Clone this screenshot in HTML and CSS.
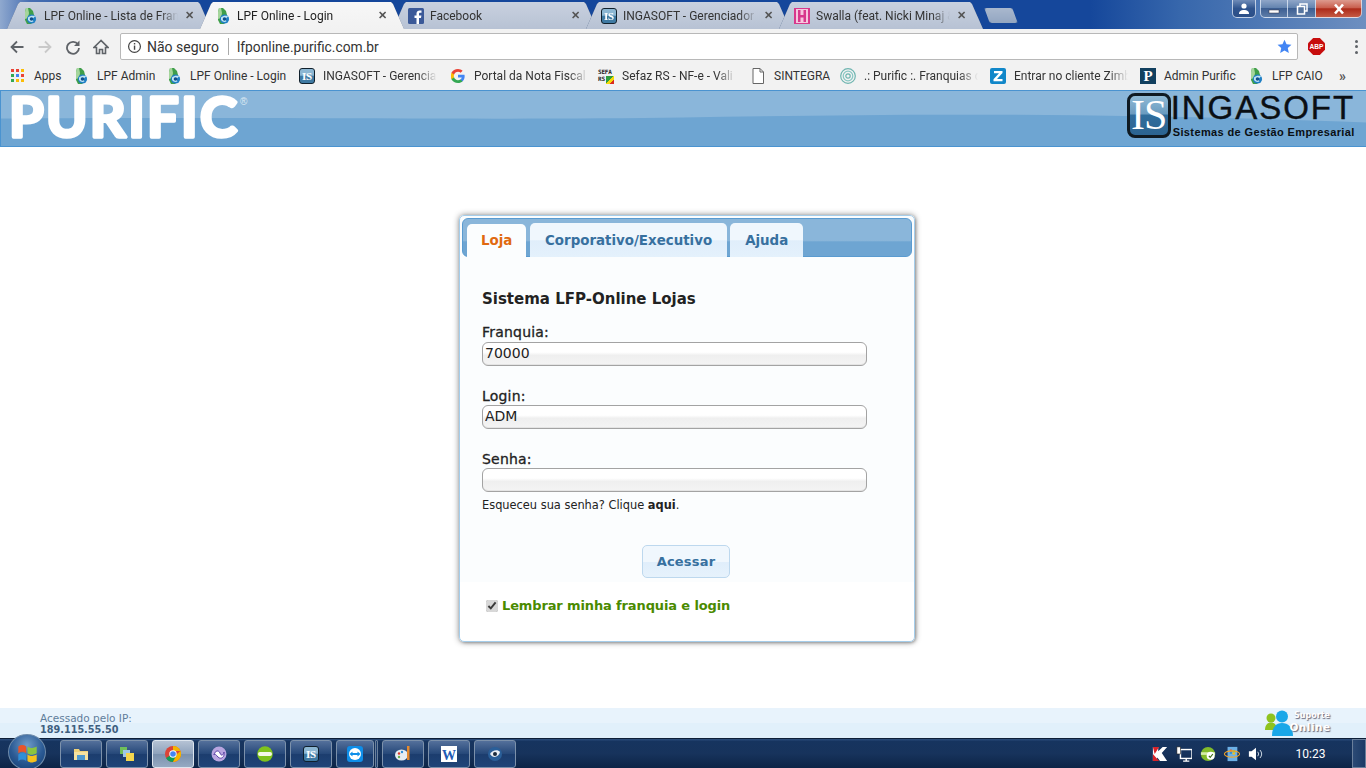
FILE: index.html
```html
<!DOCTYPE html>
<html lang="pt-BR">
<head>
<meta charset="utf-8">
<title>LPF Online - Login</title>
<link rel="stylesheet" href="styles.css">
</head>
<body>
<svg class="defs" aria-hidden="true">
  <symbol id="i-lpf" viewBox="0 0 16 16">
    <path d="M4 0h4l3 3 1 4-1 7-2 2H5l-2-4V4z" fill="#3f9e4a"/>
    <path d="M4 0h2l1 5-1 5-3 1V4z" fill="#a5d59c"/>
    <circle cx="9.500" cy="11" r="4.600" fill="#1f7fc4"/>
    <path d="M6 9.500c2-2 6-2.500 7.500-.5-2-.5-3.500 2.500-2 4.500-2 1-4 .5-5.500-1.500z" fill="#bfe4f5"/>
    <circle cx="9.500" cy="11" r="1.800" fill="#12508c"/>
  </symbol>
  <symbol id="i-fb" viewBox="0 0 16 16">
    <rect width="16" height="16" rx="1.500" fill="#3b5998"/>
    <path d="M11 16v-6h2l.4-2.500H11V6c0-.8.300-1.200 1.200-1.200h1.300V2.500c-.5-.1-1.200-.1-1.900-.1C10 2.400 8.500 3.500 8.500 5.500v2H6.500V10h2v6z" fill="#fff"/>
  </symbol>
  <symbol id="i-sw" viewBox="0 0 16 16">
    <rect width="16" height="16" fill="#d8388c"/>
    <rect x="2" y="1" width="12" height="14" fill="#f7c6de"/>
    <path d="M4 2h2.500v5h3V2H12v12H9.500V9.500h-3V14H4z" fill="#d8388c"/>
  </symbol>
  <symbol id="i-g" viewBox="0 0 16 16">
    <path d="M15.600 8.200c0-.6-.1-1.100-.2-1.600H8v3h4.300c-.2 1-.8 1.800-1.600 2.400v2h2.600c1.500-1.400 2.300-3.400 2.300-5.800z" fill="#4285f4"/>
    <path d="M8 16c2.200 0 4-.7 5.300-2l-2.600-2c-.7.500-1.600.8-2.700.8-2.100 0-3.900-1.400-4.500-3.300H.5v2.100C1.800 14.200 4.700 16 8 16z" fill="#34a853"/>
    <path d="M3.500 9.500c-.3-1-.3-2.100 0-3.100V4.300H.5C-.2 5.600-.2 10.300.5 11.600z" fill="#fbbc05"/>
    <path d="M8 3.200c1.200 0 2.200.4 3 1.200l2.300-2.300C11.900.8 10.100 0 8 0 4.700 0 1.800 1.800.5 4.300l3 2.100C4.100 4.600 5.900 3.200 8 3.200z" fill="#ea4335"/>
  </symbol>
  <symbol id="i-doc" viewBox="0 0 16 16">
    <path d="M3 .5h7l3.500 3.500v11.500H3z" fill="#fff" stroke="#666"/>
    <path d="M10 .5v3.500h3.500" fill="none" stroke="#666"/>
  </symbol>
  <symbol id="i-ring" viewBox="0 0 16 16">
    <circle cx="8" cy="8" r="7.300" fill="none" stroke="#6fb5b0" stroke-width="1.200"/>
    <circle cx="8" cy="8" r="4.800" fill="none" stroke="#86c6c2" stroke-width="1.200"/>
    <circle cx="8" cy="8" r="2.200" fill="none" stroke="#6fb5b0" stroke-width="1.200"/>
  </symbol>
  <symbol id="i-z" viewBox="0 0 16 16">
    <rect width="16" height="16" rx="2" fill="#1187c9"/>
    <path d="M4 3h8.500v2L7 11h5.500v2.300H3.500v-2L9 5.300H4z" fill="#fff"/>
  </symbol>
  <symbol id="i-win" viewBox="0 0 16 16">
    <path d="M1 3.500c2-1.500 4-1.500 6 0v5c-2-1.500-4-1.500-6 0z" fill="#e8542a"/>
    <path d="M8 3.500c2 1.500 4 1.500 7 0v5c-3 1.500-5 1.500-7 0z" fill="#8bc53f"/>
    <path d="M1 9.500c2-1.500 4-1.500 6 0v5c-2-1.500-4-1.500-6 0z" fill="#2f8fd8"/>
    <path d="M8 9.500c2 1.500 4 1.500 7 0v5c-3 1.500-5 1.500-7 0z" fill="#f6c21c"/>
  </symbol>
</svg>

<div class="tabstrip">
  <div class="tabs">
    <div class="tab"><svg class="ico"><use href="#i-lpf"/></svg><span class="tab-title">LPF Online - Lista de Fran</span><span class="tab-x">✕</span></div>
    <div class="tab tab-active"><svg class="ico"><use href="#i-lpf"/></svg><span class="tab-title">LPF Online - Login</span><span class="tab-x">✕</span></div>
    <div class="tab"><svg class="ico"><use href="#i-fb"/></svg><span class="tab-title">Facebook</span><span class="tab-x">✕</span></div>
    <div class="tab"><span class="fav-is">IS</span><span class="tab-title">INGASOFT - Gerenciador</span><span class="tab-x">✕</span></div>
    <div class="tab"><svg class="ico"><use href="#i-sw"/></svg><span class="tab-title">Swalla (feat. Nicki Minaj &amp;</span><span class="tab-x">✕</span></div>
    <div class="tab-new"></div>
  </div>
  <div class="winctl">
    <div class="wb wb-user"><svg viewBox="0 0 14 12" class="wb-ico"><circle cx="7" cy="3" r="2.600" fill="#fff"/><path d="M2 11c0-3 2-4 5-4s5 1 5 4z" fill="#fff"/></svg></div>
    <div class="wb wb-min"><svg viewBox="0 0 14 12" class="wb-ico"><rect x="2" y="7" width="10" height="3" fill="#fff" stroke="#334" stroke-width=".5"/></svg></div>
    <div class="wb wb-max"><svg viewBox="0 0 14 12" class="wb-ico"><rect x="5" y="1" width="7" height="7" fill="none" stroke="#fff" stroke-width="1.500"/><rect x="2.500" y="3.500" width="7" height="7.500" fill="#56759f" stroke="#fff" stroke-width="1.500"/></svg></div>
    <div class="wb wb-close"><svg viewBox="0 0 14 12" class="wb-ico"><path d="M3 1.500l8 9M11 1.500l-8 9" stroke="#fff" stroke-width="2.600"/></svg></div>
  </div>
</div>

<div class="toolbar">
  <div class="nav"><svg viewBox="0 0 16 16" class="nav-ico"><path d="M14.500 8H3M8 2.500L2.500 8 8 13.500" fill="none" stroke="#5f6368" stroke-width="1.800"/></svg></div>
  <div class="nav"><svg viewBox="0 0 16 16" class="nav-ico"><path d="M1.500 8H13M8 2.500L13.500 8 8 13.500" fill="none" stroke="#c9c9c9" stroke-width="1.800"/></svg></div>
  <div class="nav"><svg viewBox="0 0 16 16" class="nav-ico"><path d="M13 5.500A6 6 0 1 0 14 9" fill="none" stroke="#5f6368" stroke-width="1.800"/><path d="M14.500 1.500v5.500H9z" fill="#5f6368"/></svg></div>
  <div class="nav"><svg viewBox="0 0 16 16" class="nav-ico"><path d="M8 1.500L1 8.500h2.500v6h3v-4h3v4h3v-6H15z" fill="none" stroke="#5f6368" stroke-width="1.600"/></svg></div>
  <div class="omnibox">
    <svg viewBox="0 0 16 16" class="omni-info"><circle cx="8" cy="8" r="6.300" fill="none" stroke="#444" stroke-width="1.300"/><rect x="7.300" y="7" width="1.500" height="4.500" fill="#444"/><rect x="7.300" y="4.300" width="1.500" height="1.500" fill="#444"/></svg>
    <span class="omni-sec">Não seguro</span>
    <span class="omni-sep"></span>
    <span class="omni-url">lfponline.purific.com.br</span>
    <svg viewBox="0 0 16 16" class="omni-star"><path d="M8 .8l2.200 4.800 5.200.6-3.900 3.500 1.100 5.200L8 12.300l-4.600 2.600 1.100-5.200L.6 6.200l5.200-.6z" fill="#4285f4"/></svg>
  </div>
  <svg viewBox="0 0 18 18" class="abp"><path d="M5.500 0h7L18 5.500v7L12.500 18h-7L0 12.500v-7z" fill="#c70d0d"/><text x="9" y="12" text-anchor="middle" class="svg-abp">ABP</text></svg>
  <div class="dots"><i></i><i></i><i></i></div>
</div>

<div class="bookmarks">
  <div class="bm"><span class="apps"><i class="a1"></i><i class="a2"></i><i class="a3"></i><i class="a4"></i><i class="a5"></i><i class="a6"></i><i class="a7"></i><i class="a8"></i><i class="a9"></i></span><span class="bm-t bm-apps">Apps</span></div>
  <div class="bm"><svg class="ico"><use href="#i-lpf"/></svg><span class="bm-t">LPF Admin</span></div>
  <div class="bm"><svg class="ico"><use href="#i-lpf"/></svg><span class="bm-t">LPF Online - Login</span></div>
  <div class="bm"><span class="fav-is">IS</span><span class="bm-t bm-fade">INGASOFT - Gerencia</span></div>
  <div class="bm"><svg class="ico ico-g"><use href="#i-g"/></svg><span class="bm-t bm-fade">Portal da Nota Fiscal</span></div>
  <div class="bm"><span class="fav-sefaz">SEFA<br>RS</span><span class="bm-t bm-fade">Sefaz RS - NF-e - Vali</span></div>
  <div class="bm"><svg class="ico"><use href="#i-doc"/></svg><span class="bm-t">SINTEGRA</span></div>
  <div class="bm"><svg class="ico"><use href="#i-ring"/></svg><span class="bm-t bm-fade">.: Purific :. Franquias d</span></div>
  <div class="bm"><svg class="ico"><use href="#i-z"/></svg><span class="bm-t bm-fade">Entrar no cliente Zimb</span></div>
  <div class="bm"><span class="fav-p">P</span><span class="bm-t">Admin Purific</span></div>
  <div class="bm"><svg class="ico"><use href="#i-lpf"/></svg><span class="bm-t">LFP CAIO</span></div>
  <div class="bm bm-more">»</div>
</div>

<header class="site-head">
  <svg class="wave" viewBox="0 0 1366 56" preserveAspectRatio="none" aria-hidden="true"><path d="M0 28C200 26 500 30 683 27 900 23 1100 22 1366 32V56H0z" fill="#6ea5d2"/></svg>
  <svg class="brand" viewBox="0 0 255 55" aria-label="PURIFIC">
    <text x="8" y="46" textLength="228" class="brand-name">PURIFIC</text>
    <text x="239" y="14" class="brand-r">®</text>
  </svg>
  <div class="inga">
    <div class="inga-box">IS</div>
    <div class="inga-text">
      <div class="inga-name">INGASOFT</div>
      <div class="inga-sub">Sistemas de Gestão Empresarial</div>
    </div>
  </div>
</header>

<main class="page">
  <section class="card">
    <nav class="card-tabs">
      <a class="ct ct-on">Loja</a>
      <a class="ct ct-a">Corporativo/Executivo</a>
      <a class="ct ct-b">Ajuda</a>
    </nav>
    <form class="form">
      <h1 class="form-title">Sistema LFP-Online Lojas</h1>
      <label class="lbl">Franquia:</label>
      <input class="inp" type="text" value="70000">
      <label class="lbl lbl-next">Login:</label>
      <input class="inp" type="text" value="ADM">
      <label class="lbl lbl-next">Senha:</label>
      <input class="inp" type="password">
      <p class="hint">Esqueceu sua senha? Clique <b>aqui</b>.</p>
      <div class="actions"><button class="btn" type="button">Acessar</button></div>
      <label class="remember"><input class="chk" type="checkbox" checked><span>Lembrar minha franquia e login</span></label>
    </form>
  </section>
</main>

<div class="foot">
  <div class="foot-ip"><div class="ip-l">Acessado pelo IP:</div><div class="ip-v">189.115.55.50</div></div>
  <div class="support">
    <svg viewBox="0 0 28 26" class="sup-ico"><circle cx="6" cy="8" r="4.500" fill="#8fc31f"/><path d="M0 20c0-5 2.500-7.500 6-7.500s6 2.500 6 7.500z" fill="#8fc31f"/><circle cx="17" cy="6.500" r="6" fill="#1aa7e8"/><path d="M7 26c0-9 4-13 10-13s11 4 11 13z" fill="#1aa7e8"/></svg>
    <div class="sup-t"><span class="sup-a">Suporte</span><span class="sup-b">Online</span></div>
  </div>
</div>

<footer class="taskbar">
  <div class="orb"><svg class="orb-logo"><use href="#i-win"/></svg></div>
  <div class="tb"><svg viewBox="0 0 16 16" class="tb-ico"><path d="M1 3h5l1 2h8v9H1z" fill="#f0d279"/><rect x="1" y="6" width="14" height="8" fill="#f6e3a0"/><rect x="4" y="9" width="8" height="5" fill="#4f9ad0"/></svg></div>
  <div class="tb"><svg viewBox="0 0 16 16" class="tb-ico"><rect x="1" y="1" width="7" height="7" fill="#6fbf5a"/><rect x="4" y="4" width="7" height="7" fill="#9fc9e8"/><rect x="7" y="7" width="8" height="8" fill="#f3d64e"/></svg></div>
  <div class="tb tb-on"><svg viewBox="0 0 16 16" class="tb-ico"><circle cx="8" cy="8" r="8" fill="#db4437"/><path d="M8 8L1 12a8 8 0 0 0 7 4l4-8z" fill="#0f9d58"/><path d="M8 0a8 8 0 0 1 7.500 5H8z" fill="#f4b400"/><path d="M15.500 5A8 8 0 0 1 8 16l4-8z" fill="#f4b400"/><circle cx="8" cy="8" r="3.700" fill="#fff"/><circle cx="8" cy="8" r="2.800" fill="#4285f4"/></svg></div>
  <div class="tb"><svg viewBox="0 0 16 16" class="tb-ico"><circle cx="8" cy="8" r="7.500" fill="#b9a5e0"/><path d="M3 9c1-5 5-5 6-2s3 3 4-1c1 5-3 8-6 5S4 7 3 9z" fill="#fff" stroke="#5d43a8"/></svg></div>
  <div class="tb"><svg viewBox="0 0 16 16" class="tb-ico"><circle cx="8" cy="8" r="7.800" fill="#7fc31c"/><rect x="1" y="6" width="14" height="4" rx="2" fill="#f4f8e8"/></svg></div>
  <div class="tb"><span class="fav-is">IS</span></div>
  <div class="tb tb-n"><svg viewBox="0 0 16 16" class="tb-ico"><rect width="16" height="16" rx="3" fill="#0e8ee9"/><circle cx="8" cy="8" r="6" fill="#fff"/><path d="M2.500 8l3-2.500V7h5V5.500l3 2.500-3 2.500V9h-5v1.500z" fill="#0e8ee9"/></svg></div>
  <div class="tb-sep"></div>
  <div class="tb"><svg viewBox="0 0 16 16" class="tb-ico"><ellipse cx="6.500" cy="9" rx="6.500" ry="5.500" fill="#e6edf2"/><circle cx="4" cy="7.500" r="1.200" fill="#d9362b"/><circle cx="7" cy="6" r="1.200" fill="#2f8fd8"/><circle cx="4" cy="11" r="1.200" fill="#6ab04c"/><rect x="12" y="0" width="2.500" height="14" fill="#e58a2e"/></svg></div>
  <div class="tb"><svg viewBox="0 0 16 16" class="tb-ico"><rect width="16" height="16" fill="#fff"/><text x="8" y="13.500" text-anchor="middle" class="svg-w">W</text></svg></div>
  <div class="tb"><svg viewBox="0 0 16 16" class="tb-ico"><circle cx="8" cy="8" r="7" fill="#2a5f99"/><path d="M3 8c2-4 8-5 10-2-1 5-7 7-10 2z" fill="#e9eef4"/><circle cx="8" cy="8" r="2" fill="#1b2a3c"/></svg></div>
  <div class="tray">
    <svg viewBox="0 0 18 18" class="tr"><path d="M1 1h6v5l5-5h5l-6 7 6 9H9l-3-4-1 4H1z" fill="#fff"/><path d="M1 1h7L3 9zM1 9l7 8H1z" fill="#d8232a"/></svg>
    <svg viewBox="0 0 18 18" class="tr"><rect x="5" y="4" width="13" height="10" fill="none" stroke="#fff" stroke-width="1.600"/><rect x="1" y="1" width="4" height="8" fill="#fff" stroke="#222" stroke-width=".7"/><path d="M8 17h7M11.500 14v3" stroke="#fff" stroke-width="1.600"/></svg>
    <svg viewBox="0 0 18 18" class="tr"><circle cx="9" cy="9" r="8" fill="#82bb2a"/><rect x="1" y="7" width="16" height="3" fill="#d6ecaa"/><circle cx="12" cy="11" r="4.500" fill="#fff"/><path d="M10 11l1.500 1.700L14.500 9" fill="none" stroke="#3a6d12" stroke-width="1.300"/></svg>
    <svg viewBox="0 0 18 18" class="tr"><rect x="4" y="1" width="11" height="16" fill="#6cb0e6"/><use href="#i-win" x="6" y="3" width="7" height="7"/><ellipse cx="9" cy="9" rx="8.500" ry="3.500" fill="none" stroke="#f0a52a" stroke-width="1.200"/></svg>
    <svg viewBox="0 0 18 18" class="tr"><path d="M1 6h3l5-4v14l-5-4H1z" fill="#fff"/><path d="M11 6.500a4 4 0 0 1 0 5M13.500 4.500a7 7 0 0 1 0 9" fill="none" stroke="#dfe8f0" stroke-width="1"/></svg>
    <span class="clock">10:23</span>
    <div class="show-desk"></div>
  </div>
</footer>
</body>
</html>
```
FILE: styles.css
```css
* { box-sizing: border-box; }
html, body { margin: 0; height: 100%; }
body {
  width: 1366px;
  height: 768px;
  overflow: hidden;
  display: flex;
  flex-direction: column;
  background: #fff;
  font-family: "DejaVu Sans", sans-serif;
}
.defs { position: absolute; width: 0; height: 0; }
.ico { width: 16px; height: 16px; flex: none; }
.ico-g { width: 14px; height: 14px; margin: 0 1px; }
.svg-abp { font: 700 7px "Liberation Sans", sans-serif; fill: #fff; }
.svg-w { font: 700 14px "Liberation Serif", serif; fill: #1f5bb5; }

.fav-is {
  width: 16px;
  height: 16px;
  flex: none;
  display: block;
  border: 1px solid #10202c;
  border-radius: 3px;
  background: linear-gradient(#8cb7d3 0, #8cb7d3 45%, #3f7aa3 50%, #3f7aa3 100%);
  color: #fff;
  font: 700 11px/14px "Liberation Serif", serif;
  text-align: center;
  letter-spacing: -.3px;
}
.fav-p {
  width: 16px;
  height: 16px;
  flex: none;
  display: block;
  background: #12405f;
  color: #fff;
  font: 700 15px/16px "Liberation Serif", serif;
  text-align: center;
}
.fav-sefaz {
  position: relative;
  width: 16px;
  height: 16px;
  flex: none;
  display: block;
  font: 700 6px/7.500px "DejaVu Sans Mono", monospace;
  letter-spacing: -.2px;
  color: #222;
}
.fav-sefaz::after {
  content: "";
  position: absolute;
  right: 0;
  bottom: 0;
  width: 8px;
  height: 8px;
  background: linear-gradient(135deg, #2f9e3f 0 45%, #f4d90a 45% 70%, #d92c20 70%);
}

/* Tab strip */
.tabstrip {
  height: 29px;
  flex: none;
  display: flex;
  justify-content: space-between;
  background:
    linear-gradient(90deg, rgba(165,186,216,.85) 0, rgba(120,150,200,.5) 30px, rgba(26,76,158,0) 150px),
    linear-gradient(90deg, #15479b 0, #15479b 1090px, #3767ac 1180px, #6d8fc0 1366px);
}
.tabs { display: flex; padding: 2px 0 0 7px; }
.tab {
  position: relative;
  width: 204px;
  height: 27px;
  margin-left: -11px;
  padding: 0 0 0 15px;
  display: flex;
  align-items: center;
  font: 12px/16px Roboto, sans-serif;
  color: #333;
  filter: drop-shadow(0 0 .6px #3c5175);
}
.tab:first-child { margin-left: 0; }
.tab::before {
  content: "";
  position: absolute;
  inset: 0;
  background: linear-gradient(#c9d1df, #b7c2d4);
  clip-path: polygon(0 100%, 11px 2px, 13px 0, calc(100% - 13px) 0, calc(100% - 11px) 2px, 100% 100%);
}
.tab-active { z-index: 2; color: #222; }
.tab-active::before { background: linear-gradient(#f7f7f7, #f2f2f2); }
.tab > * { position: relative; }
.tab-title {
  width: 140px;
  margin-left: 6px;
  white-space: nowrap;
  overflow: hidden;
  -webkit-mask-image: linear-gradient(90deg, #000 116px, transparent 134px);
  mask-image: linear-gradient(90deg, #000 116px, transparent 134px);
}
.tab-x { margin-left: -2px; width: 14px; text-align: center; font-size: 11px; font-weight: 700; color: #555; }
.tab-new {
  width: 28px;
  height: 15px;
  margin: 6px 0 0 4px;
  background: linear-gradient(#a9b8ce, #93a6c1);
  border-radius: 2px;
  transform: skewX(20deg);
  filter: drop-shadow(0 0 .6px #21406f);
}
.winctl { display: flex; padding-right: 4px; align-items: flex-start; }
.wb {
  height: 18px;
  display: flex;
  align-items: center;
  justify-content: center;
  border: 1px solid rgba(230,238,250,.75);
  border-top: 0;
  background: linear-gradient(#8fa6c8 0, #6484b0 45%, #3d5f92 50%, #5d7ca8 100%);
}
.wb-ico { width: 14px; height: 12px; }
.wb-user { width: 24px; margin-right: 4px; border-radius: 0 0 5px 5px; background: linear-gradient(#6f8cb8, #2f548e 50%, #2b4f88); }
.wb-min { width: 28px; border-radius: 0 0 0 5px; }
.wb-max { width: 28px; border-left: 0; }
.wb-close { width: 46px; border-left: 0; border-radius: 0 0 5px 0; background: linear-gradient(#dd9a8e 0, #c9604f 45%, #ad2b1a 52%, #c55a44 100%); }

/* Toolbar */
.toolbar {
  height: 33px;
  flex: none;
  display: flex;
  align-items: center;
  padding: 2px 0 0 3px;
  background: #f2f2f2;
}
.nav { width: 28px; height: 28px; display: flex; align-items: center; justify-content: center; }
.nav-ico { width: 16px; height: 16px; }
.omnibox {
  width: 1178px;
  height: 27px;
  margin-left: 5px;
  display: flex;
  align-items: center;
  padding: 0 5px 0 6px;
  background: #fff;
  border: 1px solid #b8b8b8;
  border-radius: 2px;
  font: 14px Roboto, sans-serif;
}
.omni-info { width: 15px; height: 15px; flex: none; }
.omni-sec { margin-left: 5px; color: #333; }
.omni-sep { width: 1px; height: 17px; margin: 0 8px 0 9px; background: #aaa; }
.omni-url { flex: 1; color: #333; font-size: 13.800px; }
.omni-star { width: 15px; height: 15px; flex: none; }
.abp { width: 17px; height: 17px; margin-left: 10px; flex: none; }
.dots { display: flex; flex-direction: column; gap: 2.500px; margin-left: 30px; }
.dots i { width: 3px; height: 3px; border-radius: 50%; background: #5f6368; display: block; }

/* Bookmarks */
.bookmarks {
  height: 28px;
  flex: none;
  display: grid;
  grid-template-columns: 63px 93px 133px 151px 148px 152px 90px 150px 150px 108px 89px 20px;
  align-items: center;
  padding: 0 0 1px 10px;
  background: #f2f2f2;
  font: 12px Roboto, sans-serif;
  color: #333;
}
.bm { display: flex; align-items: center; min-width: 0; }
.bm-t { margin-left: 8px; white-space: nowrap; overflow: hidden; }
.bm-apps { margin-left: 10px; }
.bm-fade {
  width: 122px;
  -webkit-mask-image: linear-gradient(90deg, #000 95px, transparent 114px);
  mask-image: linear-gradient(90deg, #000 95px, transparent 114px);
}
.bm-more { font-size: 14px; font-weight: 700; color: #555; padding-left: 2px; }
.apps { display: grid; grid-template-columns: repeat(3, 3px); gap: 2px; margin-left: 1px; width: 13px; }
.apps i { height: 3px; display: block; }
.a1 { background: #ea4335; } .a2 { background: #ea4335; } .a3 { background: #fbbc05; }
.a4 { background: #34a853; } .a5 { background: #4285f4; } .a6 { background: #ea4335; }
.a7 { background: #34a853; } .a8 { background: #fbbc05; } .a9 { background: #fbbc05; }

/* Site header */
.site-head {
  position: relative;
  height: 57px;
  flex: none;
  display: flex;
  justify-content: space-between;
  background: #8ab6da;
  border: 1px solid #4a93d0;
  border-width: 1px 0 1px 1px;
  overflow: hidden;
}
.wave { position: absolute; left: 0; top: 0; width: 100%; height: 100%; }
.brand { position: relative; width: 255px; height: 55px; flex: none; }
.brand-name {
  font: 700 56px Lato, sans-serif;
  fill: #fff;
  stroke: #fff;
  stroke-width: 3.500px;
  stroke-linejoin: round;
  stroke-linecap: round;
}
.brand-r { font: 10px "Liberation Sans", sans-serif; fill: #dfeaf3; }
.inga { position: relative; display: flex; padding: 2px 11px 0 0; }
.inga-box {
  width: 44px;
  height: 45px;
  border: 3px solid #0f1a22;
  border-radius: 8px;
  background: linear-gradient(#8fbad6 0, #6b9cc0 45%, #2f6d9c 50%, #2c6491 100%);
  color: #fff;
  font: 42px/39px "Liberation Serif", serif;
  letter-spacing: -1px;
  text-align: center;
}
.inga-text { margin-left: 0; color: #0a0f14; }
.inga-name { font: 33px/30px "Liberation Sans", sans-serif; letter-spacing: 1.950px; -webkit-text-stroke: .4px #0a0f14; }
.inga-sub { font: 700 11px/12px "Liberation Sans", sans-serif; letter-spacing: .38px; margin-top: 3px; padding-left: 2px; }

/* Page */
.page { flex: 1; padding: 68px 0 0 459px; min-height: 0; }
.card {
  width: 456px;
  height: 427px;
  padding: 2px 2px 0;
  background: linear-gradient(#fbfdfe 0, #fbfdfe 86%, #fff 86%);
  border: 1px solid #a5cdea;
  border-radius: 5px;
  box-shadow: 0 0 6px rgba(0,0,0,.45), 1px 1px 3px rgba(0,0,0,.25);
}
.card-tabs {
  height: 39px;
  display: flex;
  align-items: flex-end;
  padding-left: 4px;
  background: linear-gradient(#8ab6da 0, #8ab6da 58%, #6ea5d2 62%, #6ea5d2 100%);
  border: 1px solid #5a9bd0;
  border-radius: 6px;
}
.ct {
  height: 33px;
  padding: 0 15px;
  display: flex;
  align-items: center;
  font-size: 13.400px;
  font-weight: 700;
  color: #37709f;
  background: linear-gradient(#f0f7fd 0, #f0f7fd 50%, #e0eefb 52%, #e4f1fc 100%);
  border-radius: 5px 5px 0 0;
  margin-bottom: -1px;
}
.ct-on { width: 59px; padding: 0 0 0 14px; color: #e0690f; background: #fbfdfe; }
.ct-a { margin-left: 4px; height: 34px; }
.ct-b { margin-left: 3px; height: 34px; }

.form { padding: 0 0 0 20px; }
.form-title { margin: 31px 0 0; font-size: 15px; line-height: 22px; font-weight: 700; color: #222; }
.lbl { display: block; font-size: 14px; line-height: 18px; margin: 13px 0 1px; color: #222; letter-spacing: .2px; -webkit-text-stroke: .3px #222; }
.lbl-next { margin: 21px 0 0; }
.inp {
  display: block;
  width: 385px;
  height: 24px;
  padding: 0 2px 2px;
  border: 1px solid #a3a3a3;
  border-radius: 6px;
  background: linear-gradient(#fff 0, #fff 42%, #efefef 56%, #f4f4f4 100%);
  box-shadow: inset 0 -1px 0 #e4e4e4;
  font: 14px "DejaVu Sans", sans-serif;
  color: #222;
  outline: 0;
}
.hint { margin: 5px 0 0; font-size: 11.400px; line-height: 16px; color: #222; }
.hint b { font-weight: 700; }
.actions { display: flex; justify-content: center; width: 408px; margin-top: 32px; }
.btn {
  width: 88px;
  height: 33px;
  padding: 0;
  border: 1px solid #bdd8ee;
  border-radius: 5px;
  background: linear-gradient(#f0f7fd 0, #f0f7fd 50%, #e0eefb 52%, #e6f2fc 100%);
  font: 700 13px "DejaVu Sans", sans-serif;
  letter-spacing: .2px;
  color: #37709f;
}
.remember { display: flex; align-items: center; margin: 20px 0 0 4px; font-size: 13px; letter-spacing: -.13px; font-weight: 700; color: #4a8a00; }
.chk { width: 12px; height: 12px; margin: 0 4px 0 0; accent-color: #d8d8d8; }

/* Footer strip */
.foot {
  position: relative;
  height: 30px;
  flex: none;
  display: flex;
  justify-content: space-between;
  padding: 3px 35px 0 40px;
  background: linear-gradient(#e8f3fc 0, #e8f3fc 50%, #e1f0fb 50%, #e1f0fb 100%);
}
.foot-ip { padding-top: 1px; font-size: 10.500px; line-height: 12px; }
.ip-l { color: #5f7d9b; }
.ip-v { font-size: 9.700px; font-weight: 700; color: #3f5f7f; }
.support { display: flex; align-items: flex-start; margin-top: -1px; }
.sup-ico { width: 28px; height: 26px; }
.sup-t { width: 42px; display: flex; flex-direction: column; margin-left: -4px; text-align: center; color: #fff; text-shadow: 1px 1px 1px #667; font-weight: 700; }
.sup-a { font-size: 8px; line-height: 11px; padding-left: 4px; }
.sup-b { font-size: 10.500px; line-height: 12px; letter-spacing: .5px; }

/* Taskbar */
.taskbar {
  height: 30px;
  flex: none;
  display: flex;
  align-items: center;
  padding-left: 60px;
  position: relative;
  background: linear-gradient(#2f507f 0, #16345f 8%, #17335c 50%, #0c2446 100%);
  border-top: 1px solid #0d1f38;
}
.orb {
  position: absolute;
  left: 8px;
  top: -5px;
  width: 38px;
  height: 36px;
  border-radius: 50%;
  display: flex;
  align-items: center;
  justify-content: center;
  background: radial-gradient(circle at 50% 30%, #6f9bc8, #2b5a94 55%, #0f3a6e);
  border: 1px solid #6f8cab;
}
.orb-logo { width: 21px; height: 21px; }
.tb {
  width: 42px;
  height: 28px;
  margin-right: 4px;
  display: flex;
  align-items: center;
  justify-content: center;
  border: 1px solid #7c91ab;
  border-radius: 3px;
  background: linear-gradient(#54709b 0, #27497a 48%, #1c3d6e 52%, #1f4478 100%);
}
.tb-on { background: linear-gradient(#b5c2d4 0, #8fa3bd 48%, #7b91ae 52%, #95a9c2 100%); border-color: #dde5ee; }
.tb-n { width: 38px; margin-right: 1px; }
.tb-sep { width: 3px; height: 28px; margin-right: 4px; border: 1px solid #6b819c; border-radius: 1px; background: #1c3d6e; }
.tb-ico { width: 16px; height: 16px; }
.tray { margin-left: auto; display: flex; align-items: center; height: 100%; }
.tr { width: 16px; height: 16px; margin-right: 8px; }
.clock { width: 76px; text-align: center; padding-right: 7px; margin-left: 4px; font: 12px Roboto, sans-serif; color: #fff; }
.show-desk { width: 14px; height: 100%; border: 1px solid #6a7f9b; background: linear-gradient(90deg, #2c4a75, #1b3a66); }
```
